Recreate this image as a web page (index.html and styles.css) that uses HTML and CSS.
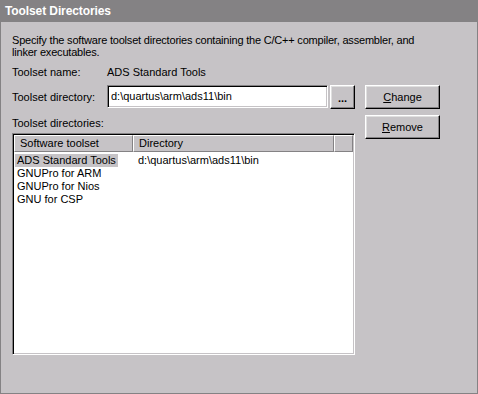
FILE: index.html
```html
<!DOCTYPE html>
<html>
<head>
<meta charset="utf-8">
<link rel="stylesheet" href="styles.css">
</head>
<body>
<div class="window">
  <div class="title">Toolset Directories</div>
  <div class="body">
    <p class="desc">Specify the software toolset directories containing the C/C++ compiler, assembler, and<br>linker executables.</p>
    <div class="main">
      <div class="left">
        <div class="row name-row">
          <span class="lbl">Toolset name:</span>
          <span class="val">ADS Standard Tools</span>
        </div>
        <div class="row dir-row">
          <span class="lbl">Toolset directory:</span>
          <div class="input">d:\quartus\arm\ads11\bin</div>
          <div class="btn browse">...</div>
        </div>
        <div class="list-lbl">Toolset directories:</div>
        <div class="list">
          <div class="header">
            <div class="hcell c1">Software toolset</div>
            <div class="hcell c2">Directory</div>
            <div class="hcell c3"></div>
          </div>
          <div class="item"><span class="c1"><span class="sel">ADS Standard Tools</span></span><span class="c2">d:\quartus\arm\ads11\bin</span></div>
          <div class="item"><span class="c1"><span class="txt">GNUPro for ARM</span></span></div>
          <div class="item"><span class="c1"><span class="txt">GNUPro for Nios</span></span></div>
          <div class="item"><span class="c1"><span class="txt">GNU for CSP</span></span></div>
        </div>
      </div>
      <div class="right">
        <div class="btn action"><u>C</u>hange</div>
        <div class="btn action"><u>R</u>emove</div>
      </div>
    </div>
  </div>
</div>
</body>
</html>
```

FILE: styles.css
```css
* { box-sizing: border-box; }
html, body { margin: 0; padding: 0; }
body {
  width: 478px;
  height: 394px;
  overflow: hidden;
  font-family: "Liberation Sans", Arial, sans-serif;
  font-size: 11px;
  line-height: 13px;
  color: #000;
  background: #c6c3c6;
}
.window {
  width: 478px;
  height: 394px;
  background: #c6c3c6;
  border-left: 1px solid #848284;
  border-right: 1px solid #848284;
  border-bottom: 1px solid #848284;
  display: flex;
  flex-direction: column;
}
.title {
  height: 22px;
  background: #848284;
  color: #fff;
  font-weight: bold;
  font-size: 12px;
  line-height: 22px;
  padding-left: 5px;
  margin-left: -1px;
  margin-right: -1px;
  letter-spacing: -0.1px;
}
.body {
  padding: 12px 0 0 11px;
}
.desc {
  margin: 0;
  line-height: 12px;
  letter-spacing: -0.2px;
}
.main {
  display: flex;
  gap: 10px;
  margin-top: 8px;
}
.left {
  width: 343px;
  display: flex;
  flex-direction: column;
}
.row {
  display: flex;
  align-items: center;
}
.lbl {
  width: 95px;
}
.name-row {
  height: 13px;
}
.dir-row {
  margin-top: 6px;
  height: 24px;
}
.input {
  width: 221px;
  height: 23px;
  background: #fff;
  border-top: 1px solid #848284;
  border-left: 1px solid #848284;
  border-right: 1px solid #fff;
  border-bottom: 1px solid #fff;
  box-shadow: inset 1px 1px 0 #000, inset -1px -1px 0 #c6c3c6;
  padding: 4px 0 0 3px;
  font-size: 11px;
  line-height: 13px;
  align-self: flex-start;
}
.btn {
  background: #c6c3c6;
  border-top: 1px solid #fff;
  border-left: 1px solid #fff;
  border-right: 1px solid #000;
  border-bottom: 1px solid #000;
  box-shadow: inset -1px -1px 0 #848284, inset 1px 1px 0 #dfdfdf;
  display: flex;
  align-items: center;
  justify-content: center;
}
.browse {
  width: 25px;
  height: 24px;
  margin-left: 2px;
  font-weight: bold;
  align-self: flex-start;
  padding-top: 2px;
}
.list-lbl {
  margin-top: 8px;
  height: 13px;
}
.list {
  margin-top: 3px;
  width: 343px;
  height: 222px;
  background: #fff;
  border-top: 1px solid #848284;
  border-left: 1px solid #848284;
  border-right: 1px solid #fff;
  border-bottom: 1px solid #fff;
  box-shadow: inset 1px 1px 0 #000, inset -1px -1px 0 #c6c3c6;
  padding: 1px 1px 0 1px;
}
.header {
  display: flex;
  height: 17px;
}
.hcell {
  background: #c6c3c6;
  border-top: 1px solid #fff;
  border-left: 1px solid #fff;
  border-right: 1px solid #848284;
  border-bottom: 1px solid #848284;
  padding: 1px 0 0 5px;
  line-height: 13px;
}
.hcell.c1 { width: 119px; }
.hcell.c2 { width: 201px; }
.hcell.c3 { flex: 1; }
.item {
  display: flex;
  height: 13px;
  line-height: 13px;
}
.header + .item { margin-top: 2px; }
.item .c1 {
  width: 119px;
  padding-left: 1px;
}
.item .c2 {
  padding-left: 5px;
}
.sel {
  background: #c6c3c6;
  padding: 0 2px;
  display: inline-block;
}
.txt {
  padding: 0 2px;
  display: inline-block;
}
.right {
  display: flex;
  flex-direction: column;
  gap: 6px;
  padding-top: 19px;
}
.action {
  width: 75px;
  height: 24px;
}
.action u { text-decoration: underline; }
```
